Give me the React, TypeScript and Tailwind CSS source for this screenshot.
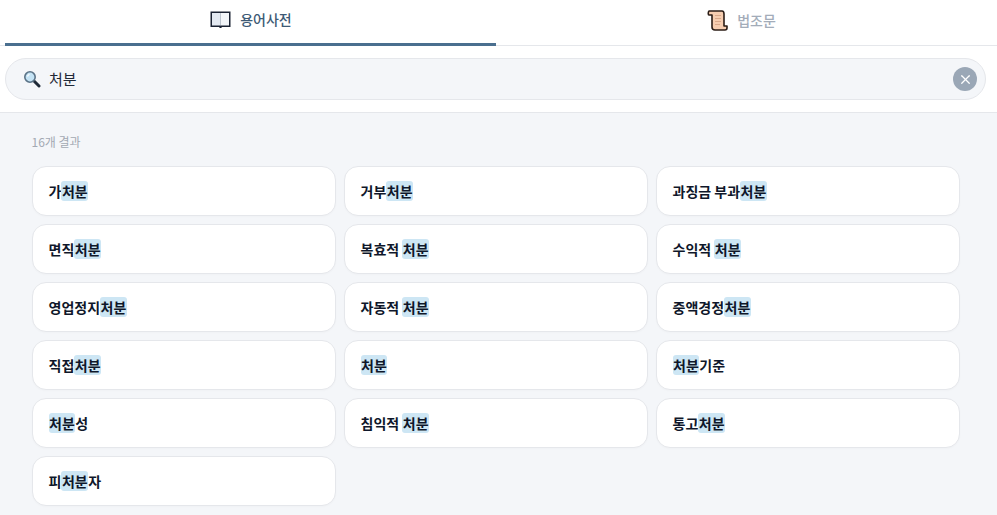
import { X } from 'lucide-react'

const TERMS: [string, string, string][] = [
  ['가', '처분', ''],
  ['거부', '처분', ''],
  ['과징금 부과', '처분', ''],
  ['면직', '처분', ''],
  ['복효적 ', '처분', ''],
  ['수익적 ', '처분', ''],
  ['영업정지', '처분', ''],
  ['자동적 ', '처분', ''],
  ['중액경정', '처분', ''],
  ['직접', '처분', ''],
  ['', '처분', ''],
  ['', '처분', '기준'],
  ['', '처분', '성'],
  ['침익적 ', '처분', ''],
  ['통고', '처분', ''],
  ['피', '처분', '자'],
]

function BookIcon() {
  return (
    <svg width="22" height="20" viewBox="-0.5 -0.5 22 20" className="shrink-0">
      <path d="M1 2h20v15.500H12.500l-.8 1h-1.400l-.8-1H1z" fill="#1a2233" />
      <path d="M2.500 3.500h8.300V16H2.500z" fill="#e3e9f1" />
      <path d="M11.200 3.500h8.300V16h-8.300z" fill="#f2f5f9" />
      <path d="M11 3.500V16" stroke="#c8d0da" strokeWidth="0.800" />
    </svg>
  )
}

function ScrollIcon() {
  return (
    <svg width="22" height="22" viewBox="0 0 22 22" className="shrink-0">
      <path d="M2 2h13c2 0 2 2 2 3v12h3v2c0 1-1 2-2 2H8c-2 0-3-1-3-3V6H2C1 6 1 3 2 2z" fill="#f6cdb0" stroke="#2b1d16" strokeWidth="1.600" strokeLinejoin="round" />
      <path d="M8 6.500h6M8 9.500h6M8 12.500h6M8 15.500h5" stroke="#d9a88a" strokeWidth="1" />
    </svg>
  )
}

function SearchIcon() {
  return (
    <svg width="18" height="18" viewBox="0 0 18 18" className="shrink-0">
      <path d="M10.500 10.500l5.500 5.500" stroke="#1f2937" strokeWidth="3" strokeLinecap="round" />
      <circle cx="7" cy="7" r="5.200" fill="#c4e3f5" stroke="#5b7387" strokeWidth="1.600" />
      <path d="M4.500 6.500C4.800 5.400 5.600 4.700 6.600 4.500" stroke="#fff" strokeWidth="1.200" fill="none" />
    </svg>
  )
}

export default function App() {
  return (
    <div className="min-h-[515px] bg-[#f4f6f9] text-[#0f172a] font-['Noto_Sans_CJK_KR','Noto_Sans',sans-serif]">
      <div className="bg-white">
        <div className="flex px-[5px] border-b border-[#e5e7eb] h-[46px]">
          <div className="w-[491px] flex items-center justify-center gap-[9px] border-b-[3px] border-[#4a6f8f] h-[46px] pb-[5px] text-sm font-medium text-[#3d5a75]">
            <BookIcon />
            <span>용어사전</span>
          </div>
          <div className="w-[491px] flex items-center justify-center gap-[8px] pb-[5px] text-sm font-medium text-[#a3acb9]">
            <ScrollIcon />
            <span>법조문</span>
          </div>
        </div>
        <div className="px-[5px] pt-[12px] pb-[12px] border-b border-[#e5e7eb]">
          <div className="w-[981px] h-[42px] rounded-full border border-[#e5e7eb] bg-[#f4f6f9] flex items-center pl-[17px] pr-[8px]">
            <SearchIcon />
            <span className="ml-[8px] text-[15px] text-[#1f2937]">처분</span>
            <span className="ml-auto size-[24px] rounded-full bg-[#9aa7b6] flex items-center justify-center">
              <X className="size-[15px] text-white" strokeWidth={2} />
            </span>
          </div>
        </div>
      </div>
      <div className="pl-[32px] pt-[20px]">
        <div className="text-xs text-[#a3a9b3] h-[18px] leading-[18px] -ml-[0.5px]">16개 결과</div>
        <div className="mt-[15px] grid grid-cols-[304px_304px_304px] gap-[8px]">
          {TERMS.map(([before, match, after], i) => (
            <div key={i} className="h-[50px] rounded-[14px] border border-[#e5e7eb] bg-white flex items-center pl-[15.5px] text-sm font-semibold whitespace-pre shadow-[0_1px_2px_rgba(0,0,0,0.02)]">
              {before}
              <mark className="bg-[#cde6f4] text-[#0f172a] rounded-[3px] px-[0.5px]">{match}</mark>
              {after}
            </div>
          ))}
        </div>
      </div>
    </div>
  )
}
